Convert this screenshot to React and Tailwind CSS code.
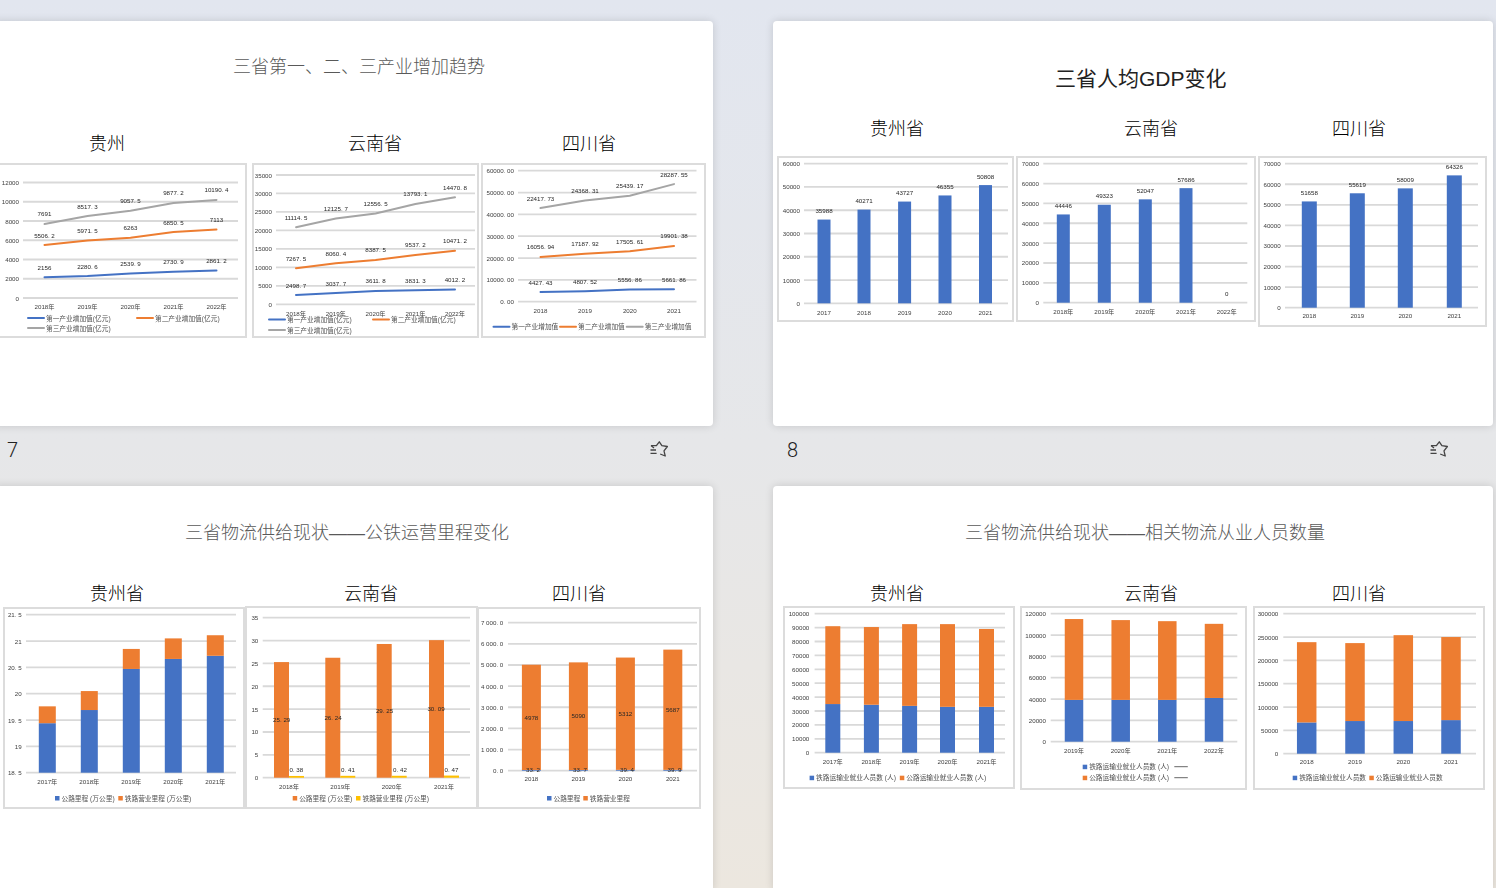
const BLUE = "#4472c4";
const ORANGE = "#ed7d31";
const GRAY = "#a5a5a5";
const YELLOW = "#ffc000";

const line = (x, y, text, color) => ({ x, y, text, color, kind: "line" });
const sq = (x, y, text, color) => ({ x, y, text, color, kind: "sq" });
const dash = (x, y) => ({ x, y, kind: "dash" });

const yrs = (list, suffix = "") => list.map((y) => y + suffix);

const guizhouLine = {
  frame: [-6, 163, 253, 175],
  cls: "ml-[1px]",
  gx: [23, 238],
  gy: [182.5, 298],
  range: [0, 12000],
  tickEnd: 19,
  ticks: ["12000", "10000", "8000", "6000", "4000", "2000", "0"],
  cats: [44.5, 87.5, 130.5, 173.5, 216.5],
  catLabels: yrs([2018, 2019, 2020, 2021, 2022], "年"),
  catY: 306,
  lines: [
    { color: BLUE, values: [2156, 2280.6, 2539.9, 2730.9, 2861.2], labels: ["2156", "2280. 6", "2539. 9", "2730. 9", "2861. 2"] },
    { color: ORANGE, values: [5506.2, 5971.5, 6263, 6850.5, 7113], labels: ["5506. 2", "5971. 5", "6263", "6850. 5", "7113"] },
    { color: GRAY, values: [7691, 8517.3, 9057.5, 9877.2, 10190.4], labels: ["7691", "8517. 3", "9057. 5", "9877. 2", "10190. 4"] },
  ],
  legend: [
    line(28, 318, "第一产业增加值(亿元)", BLUE),
    line(137, 318, "第二产业增加值(亿元)", ORANGE),
    line(28, 328, "第三产业增加值(亿元)", GRAY),
  ],
};

const yunnanLine = {
  frame: [252, 163, 227, 175],
  cls: "ml-[5px]",
  gx: [276, 475],
  gy: [175, 304.3],
  range: [0, 35000],
  tickEnd: 272,
  ticks: ["35000", "30000", "25000", "20000", "15000", "10000", "5000", "0"],
  cats: [296, 335.8, 375.6, 415.4, 455],
  catLabels: yrs([2018, 2019, 2020, 2021, 2022], "年"),
  catY: 313,
  stacked: true,
  lines: [
    { color: BLUE, values: [2498.7, 3037.7, 3611.8, 3831.3, 4012.2], labels: ["2498. 7", "3037. 7", "3611. 8", "3831. 3", "4012. 2"] },
    { color: ORANGE, values: [7267.5, 8060.4, 8387.5, 9537.2, 10471.2], labels: ["7267. 5", "8060. 4", "8387. 5", "9537. 2", "10471. 2"] },
    { color: GRAY, values: [11114.5, 12125.7, 12556.5, 13793.1, 14470.8], labels: ["11114. 5", "12125. 7", "12556. 5", "13793. 1", "14470. 8"] },
  ],
  legend: [
    line(269, 319.5, "第一产业增加值(亿元)", BLUE),
    line(373, 319.5, "第二产业增加值(亿元)", ORANGE),
    line(269, 330, "第三产业增加值(亿元)", GRAY),
  ],
};

const sichuanLine = {
  frame: [481, 163, 225, 175],
  cls: "ml-[2px]",
  gx: [518, 696.5],
  gy: [170.7, 301.7],
  range: [0, 60000],
  tickEnd: 514,
  ticks: ["60000. 00", "50000. 00", "40000. 00", "30000. 00", "20000. 00", "10000. 00", "0. 00"],
  cats: [540.5, 585, 629.8, 674],
  catLabels: yrs([2018, 2019, 2020, 2021]),
  catY: 310,
  stacked: true,
  lines: [
    { color: BLUE, values: [4427.43, 4807.52, 5556.86, 5661.86], labels: ["4427. 43", "4807. 52", "5556. 86", "5661. 86"] },
    { color: ORANGE, values: [16056.94, 17187.92, 17505.61, 19901.38], labels: ["16056. 94", "17187. 92", "17505. 61", "19901. 38"] },
    { color: GRAY, values: [22417.73, 24368.31, 25439.17, 28287.55], labels: ["22417. 73", "24368. 31", "25439. 17", "28287. 55"] },
  ],
  legend: [
    line(493.5, 326.7, "第一产业增加值", BLUE),
    line(560, 326.7, "第二产业增加值", ORANGE),
    line(626.7, 326.7, "第三产业增加值", GRAY),
  ],
};

const gdpGuizhou = {
  frame: [777, 156, 237, 166],
  cls: "ml-[4px]",
  gx: [804, 1008],
  gy: [163.7, 303.3],
  range: [0, 60000],
  tickEnd: 800,
  ticks: ["60000", "50000", "40000", "30000", "20000", "10000", "0"],
  cats: [824, 864, 904.6, 945, 985.5],
  catLabels: yrs([2017, 2018, 2019, 2020, 2021]),
  catY: 312,
  barW: 13,
  stack: [{ color: BLUE, values: [35988, 40271, 43727, 46355, 50808] }],
  valueLabels: true,
};

const gdpYunnan = {
  frame: [1016, 156, 240, 166],
  cls: "ml-[2px]",
  gx: [1043.3, 1247.3],
  gy: [163.7, 302.7],
  range: [0, 70000],
  tickEnd: 1039,
  ticks: ["70000", "60000", "50000", "40000", "30000", "20000", "10000", "0"],
  cats: [1063.3, 1104.3, 1145.3, 1186, 1226.7],
  catLabels: yrs([2018, 2019, 2020, 2021, 2022], "年"),
  catY: 311.7,
  barW: 13,
  stack: [{ color: BLUE, values: [44446, 49323, 52047, 57686, 0] }],
  valueLabels: true,
};

const gdpSichuan = {
  frame: [1258, 156, 229, 171],
  cls: "ml-[2px]",
  gx: [1285, 1478],
  gy: [163.7, 307.7],
  range: [0, 70000],
  tickEnd: 1280.7,
  ticks: ["70000", "60000", "50000", "40000", "30000", "20000", "10000", "0"],
  cats: [1309.3, 1357.3, 1405.3, 1454.3],
  catLabels: yrs([2018, 2019, 2020, 2021]),
  catY: 315.7,
  barW: 15,
  stack: [{ color: BLUE, values: [51658, 55619, 58009, 64326] }],
  valueLabels: true,
};

const roadGuizhou = {
  frame: [3, 608, 242, 202],
  cls: "ml-[10px] mt-[2px]",
  gx: [26, 236],
  gy: [615.7, 773.7],
  range: [18.5, 21.5],
  tickEnd: 21.7,
  ticks: ["21. 5", "21", "20. 5", "20", "19. 5", "19", "18. 5"],
  cats: [47.3, 89.3, 131.3, 173.3, 215.3],
  catLabels: yrs([2017, 2018, 2019, 2020, 2021], "年"),
  catY: 782.3,
  barW: 17,
  stack: [
    { color: BLUE, values: [19.44, 19.69, 20.47, 20.66, 20.72] },
    { color: ORANGE, values: [0.32, 0.36, 0.38, 0.39, 0.39] },
  ],
  legend: [
    sq(55, 799, "公路里程 (万公里)", BLUE),
    sq(118.3, 799, "铁路营业里程 (万公里)", ORANGE),
  ],
};

const roadYunnanY = (v) => 778.7 - v * 4.571;
const roadYunnan = {
  frame: [245, 607, 233, 203],
  cls: "mt-[1px]",
  gx: [262.7, 470],
  gy: [618.7, 778.7],
  range: [0, 35],
  tickEnd: 258.3,
  ticks: ["35", "30", "25", "20", "15", "10", "5", "0"],
  cats: [289, 340.3, 391.7, 444],
  catLabels: yrs([2018, 2019, 2020, 2021], "年"),
  catY: 787,
  cluster: [
    { color: ORANGE, dx: -15, w: 15, values: [25.29, 26.24, 29.25, 30.09] },
    { color: YELLOW, dx: 0, w: 15, values: [0.38, 0.41, 0.42, 0.47] },
  ],
  notes: [
    ...[["25. 29", 25.29], ["26. 24", 26.24], ["29. 25", 29.25], ["30. 09", 30.09]].map(([text, v], i) => ({
      x: [281.7, 333, 384.5, 436][i],
      y: roadYunnanY(v / 2),
      text,
    })),
    ...["0. 38", "0. 41", "0. 42", "0. 47"].map((text, i) => ({ x: [296.3, 348, 400, 451.5][i], y: 770.7, text })),
  ],
  legend: [
    sq(292.7, 799, "公路里程 (万公里)", ORANGE),
    sq(356, 799, "铁路营业里程 (万公里)", YELLOW),
  ],
};

const roadSichuan = {
  frame: [477, 608, 224, 202],
  cls: "ml-[-1px] mt-[2px]",
  gx: [508, 697],
  gy: [623.7, 771.7],
  range: [0, 7000],
  tickEnd: 503.3,
  ticks: ["7 000. 0", "6 000. 0", "5 000. 0", "4 000. 0", "3 000. 0", "2 000. 0", "1 000. 0", "0. 0"],
  cats: [531.4, 578.4, 625.4, 672.8],
  catLabels: yrs([2018, 2019, 2020, 2021]),
  catY: 779.3,
  barW: 19,
  stack: [
    { color: BLUE, values: [33.2, 33.7, 39.4, 39.9] },
    { color: ORANGE, values: [4978, 5090, 5312, 5687] },
  ],
  notes: [
    ...["4978", "5090", "5312", "5687"].map((text, i) => ({ x: [531.4, 578.4, 625.4, 672.8][i], y: [718.3, 716.5, 714.5, 710.5][i], text })),
    ...["33. 2", "33. 7", "39. 4", "39. 9"].map((text, i) => ({ x: [533, 580, 627, 674.5][i], y: 770, text })),
  ],
  legend: [
    sq(547, 799, "公路里程", BLUE),
    sq(583.3, 799, "铁路营业里程", ORANGE),
  ],
};

const staffGuizhou = {
  frame: [783, 606, 232, 183],
  cls: "ml-[10px] mt-[1px]",
  gx: [814.6, 1005],
  gy: [613.7, 752.7],
  range: [0, 100000],
  tickEnd: 809.3,
  ticks: ["100000", "90000", "80000", "70000", "60000", "50000", "40000", "30000", "20000", "10000", "0"],
  cats: [832.8, 871.4, 909.6, 947.5, 986.5],
  catLabels: yrs([2017, 2018, 2019, 2020, 2021], "年"),
  catY: 761,
  barW: 15,
  stack: [
    { color: BLUE, values: [35000, 34500, 33700, 33000, 33000] },
    { color: ORANGE, values: [56000, 55900, 58800, 59500, 56000] },
  ],
  legend: [
    sq(809.6, 777.7, "铁路运输业就业人员数 (人)", BLUE),
    sq(899.8, 777.7, "公路运输业就业人员数 (人)", ORANGE),
  ],
};

const staffYunnan = {
  frame: [1020, 606, 227, 184],
  cls: "ml-[5px] mt-[1px]",
  gx: [1050.7, 1237.3],
  gy: [613.7, 741.7],
  range: [0, 120000],
  tickEnd: 1046,
  ticks: ["120000", "100000", "80000", "60000", "40000", "20000", "0"],
  cats: [1074, 1120.7, 1167.3, 1214],
  catLabels: yrs([2019, 2020, 2021, 2022], "年"),
  catY: 750.7,
  barW: 18.5,
  stack: [
    { color: BLUE, values: [39200, 39200, 39200, 41000] },
    { color: ORANGE, values: [75800, 74800, 73800, 69500] },
  ],
  legend: [
    sq(1082.7, 766.7, "铁路运输业就业人员数 (人)", BLUE),
    dash(1174.3, 766.7),
    sq(1082.7, 777.7, "公路运输业就业人员数 (人)", ORANGE),
    dash(1174.3, 777.7),
  ],
};

const staffSichuan = {
  frame: [1253, 606, 232, 184],
  cls: "ml-[6px] mt-[1px]",
  gx: [1283.3, 1476],
  gy: [613.7, 753.7],
  range: [0, 300000],
  tickEnd: 1278.3,
  ticks: ["300000", "250000", "200000", "150000", "100000", "50000", "0"],
  cats: [1306.7, 1355, 1403.3, 1451],
  catLabels: yrs([2018, 2019, 2020, 2021]),
  catY: 761.7,
  barW: 19.5,
  stack: [
    { color: BLUE, values: [67000, 70000, 70000, 72000] },
    { color: ORANGE, values: [172000, 167000, 184000, 178000] },
  ],
  legend: [
    sq(1292.7, 777.7, "铁路运输业就业人员数", BLUE),
    sq(1369.3, 777.7, "公路运输业就业人员数", ORANGE),
  ],
};

function Chart({ data }) {
  const { frame, gx, gy, range, ticks, cats, catLabels } = data;
  const [fx, fy, fw, fh] = frame;
  const toY = (v) => gy[1] - ((v - range[0]) / (range[1] - range[0])) * (gy[1] - gy[0]);
  const tickGap = (gy[1] - gy[0]) / (ticks.length - 1);
  const running = cats.map(() => 0);

  return (
    <div className={`shrink-0 border-2 border-[#dcdcdc] bg-white ${data.cls}`}>
      <svg
        className="block blur-[0.25px]"
        width={fw - 4}
        height={fh - 4}
        viewBox={`${fx + 2} ${fy + 2} ${fw - 4} ${fh - 4}`}
      >
        {ticks.map((t, i) => (
          <g key={t}>
            <line x1={gx[0]} x2={gx[1]} y1={gy[0] + i * tickGap} y2={gy[0] + i * tickGap} stroke="#d9d9d9" strokeWidth="1.8" />
            <text x={data.tickEnd} y={gy[0] + i * tickGap} fontSize="6.2" fill="#404040" textAnchor="end" dominantBaseline="central">
              {t}
            </text>
          </g>
        ))}

        {data.stack &&
          data.stack.map((s) =>
            cats.map((cx, i) => {
              const base = running[i];
              running[i] += s.values[i];
              const floor = Math.max(base, range[0]);
              return (
                <rect
                  key={s.color + i}
                  x={cx - data.barW / 2}
                  y={toY(running[i])}
                  width={data.barW}
                  height={toY(floor) - toY(running[i])}
                  fill={s.color}
                />
              );
            })
          )}

        {data.cluster &&
          data.cluster.map((s) =>
            cats.map((cx, i) => (
              <rect key={s.color + i} x={cx + s.dx} y={toY(s.values[i])} width={s.w} height={toY(0) - toY(s.values[i])} fill={s.color} />
            ))
          )}

        {data.valueLabels &&
          data.stack[0].values.map((v, i) => (
            <text key={i} x={cats[i]} y={toY(v) - 9} fontSize="6.2" fill="#262626" textAnchor="middle" dominantBaseline="central">
              {v}
            </text>
          ))}

        {data.lines &&
          data.lines.map((s, si) => {
            const points = cats.map((cx, i) => {
              const total = data.stacked
                ? data.lines.slice(0, si + 1).reduce((sum, l) => sum + l.values[i], 0)
                : s.values[i];
              return [cx, toY(total)];
            });
            return (
              <g key={s.color}>
                <polyline points={points.map((p) => p.join(",")).join(" ")} fill="none" stroke={s.color} strokeWidth="2" strokeLinecap="round" />
                {points.map(([x, y], i) => (
                  <text key={i} x={x} y={y - 10} fontSize="6.2" fill="#262626" textAnchor="middle" dominantBaseline="central">
                    {s.labels[i]}
                  </text>
                ))}
              </g>
            );
          })}

        {data.notes &&
          data.notes.map((n) => (
            <text key={n.text} x={n.x} y={n.y} fontSize="6.2" fill="#262626" textAnchor="middle" dominantBaseline="central">
              {n.text}
            </text>
          ))}

        {cats.map((cx, i) => (
          <text key={cx} x={cx} y={data.catY} fontSize="6.2" fill="#404040" textAnchor="middle" dominantBaseline="central">
            {catLabels[i]}
          </text>
        ))}

        {data.legend &&
          data.legend.map((l, i) => {
            if (l.kind === "dash") {
              return <line key={i} x1={l.x} x2={l.x + 13.5} y1={l.y} y2={l.y} stroke="#404040" strokeWidth="0.8" />;
            }
            const textX = l.kind === "line" ? l.x + 18 : l.x + 6.5;
            return (
              <g key={i}>
                {l.kind === "line" ? (
                  <line x1={l.x} x2={l.x + 16} y1={l.y} y2={l.y} stroke={l.color} strokeWidth="2" strokeLinecap="round" />
                ) : (
                  <rect x={l.x} y={l.y - 2} width="4.5" height="4.5" fill={l.color} />
                )}
                <text x={textX} y={l.y} fontSize="6.7" fill="#505050" dominantBaseline="central">
                  {l.text}
                </text>
              </g>
            );
          })}
      </svg>
    </div>
  );
}

function Slide({ title, titleCls, headingRowCls, headings, chartRowCls, charts }) {
  return (
    <div className="h-[405px] w-[720px] shrink-0 rounded-[4px] bg-white shadow-[0_0_8px_rgba(0,0,0,0.14)]">
      <h2 className={`whitespace-nowrap ${titleCls}`}>{title}</h2>
      <div className={`flex ${headingRowCls}`}>
        {headings.map((h) => (
          <span key={h.text} className={`text-[18px] font-light leading-6 text-black ${h.cls}`}>
            {h.text}
          </span>
        ))}
      </div>
      <div className={`flex items-start ${chartRowCls}`}>
        {charts.map((c) => (
          <Chart key={c.frame[0]} data={c} />
        ))}
      </div>
    </div>
  );
}

function SlideFooter({ number }) {
  return (
    <div className="flex h-[60px] w-[720px] shrink-0 items-start justify-between pl-[14px] pr-[45px] pt-[14px]">
      <span className="font-['Roboto',sans-serif] text-[20px] font-light leading-5 text-[#222]">{number}</span>
      <svg className="mt-px" width="18" height="16" viewBox="0 0 18 16" fill="none" stroke="#444" strokeWidth="1.3" strokeLinejoin="round">
        <path d="M1 4.6H6.4L9.3 0.8L11.9 4.7L17.4 5.5L14 9.8L15.2 15L10.2 13" />
        <path d="M1 4.6L4 7M0.5 9H6M0.5 12.3H6.6" />
      </svg>
    </div>
  );
}

export default function App() {
  return (
    <div className="h-[888px] w-[1496px] overflow-hidden bg-[linear-gradient(180deg,#e2e6ef_0%,#e6e7e9_50%,#ece7df_100%)] font-['Liberation_Sans','Noto_Sans_CJK_SC',sans-serif]">
      <div className="ml-[-7px] grid w-[1500px] grid-cols-[720px_720px] gap-x-[60px] pt-[21px]">
        <Slide
          title="三省第一、二、三产业增加趋势"
          titleCls="ml-[240px] pt-[34px] text-[18px] font-light leading-6 text-[#595959]"
          headingRowCls="mt-[53px]"
          headings={[
            { text: "贵州", cls: "ml-[96px]" },
            { text: "云南省", cls: "ml-[223px]" },
            { text: "四川省", cls: "ml-[160px]" },
          ]}
          chartRowCls="mt-[7px]"
          charts={[guizhouLine, yunnanLine, sichuanLine]}
        />
        <Slide
          title="三省人均GDP变化"
          titleCls="ml-[282px] pt-[44px] text-[21px] leading-7 text-[#222]"
          headingRowCls="mt-[24px]"
          headings={[
            { text: "贵州省", cls: "ml-[97px]" },
            { text: "云南省", cls: "ml-[200px]" },
            { text: "四川省", cls: "ml-[154px]" },
          ]}
          chartRowCls="mt-[15px]"
          charts={[gdpGuizhou, gdpYunnan, gdpSichuan]}
        />
        <SlideFooter number="7" />
        <SlideFooter number="8" />
        <Slide
          title="三省物流供给现状——公铁运营里程变化"
          titleCls="ml-[192px] pt-[35px] text-[18px] font-light leading-6 text-[#595959]"
          headingRowCls="mt-[37px]"
          headings={[
            { text: "贵州省", cls: "ml-[97px]" },
            { text: "云南省", cls: "ml-[200px]" },
            { text: "四川省", cls: "ml-[154px]" },
          ]}
          chartRowCls="mt-[-1px]"
          charts={[roadGuizhou, roadYunnan, roadSichuan]}
        />
        <Slide
          title="三省物流供给现状——相关物流从业人员数量"
          titleCls="ml-[192px] pt-[35px] text-[18px] font-light leading-6 text-[#595959]"
          headingRowCls="mt-[37px]"
          headings={[
            { text: "贵州省", cls: "ml-[97px]" },
            { text: "云南省", cls: "ml-[200px]" },
            { text: "四川省", cls: "ml-[154px]" },
          ]}
          chartRowCls="mt-[-1px]"
          charts={[staffGuizhou, staffYunnan, staffSichuan]}
        />
      </div>
    </div>
  );
}
